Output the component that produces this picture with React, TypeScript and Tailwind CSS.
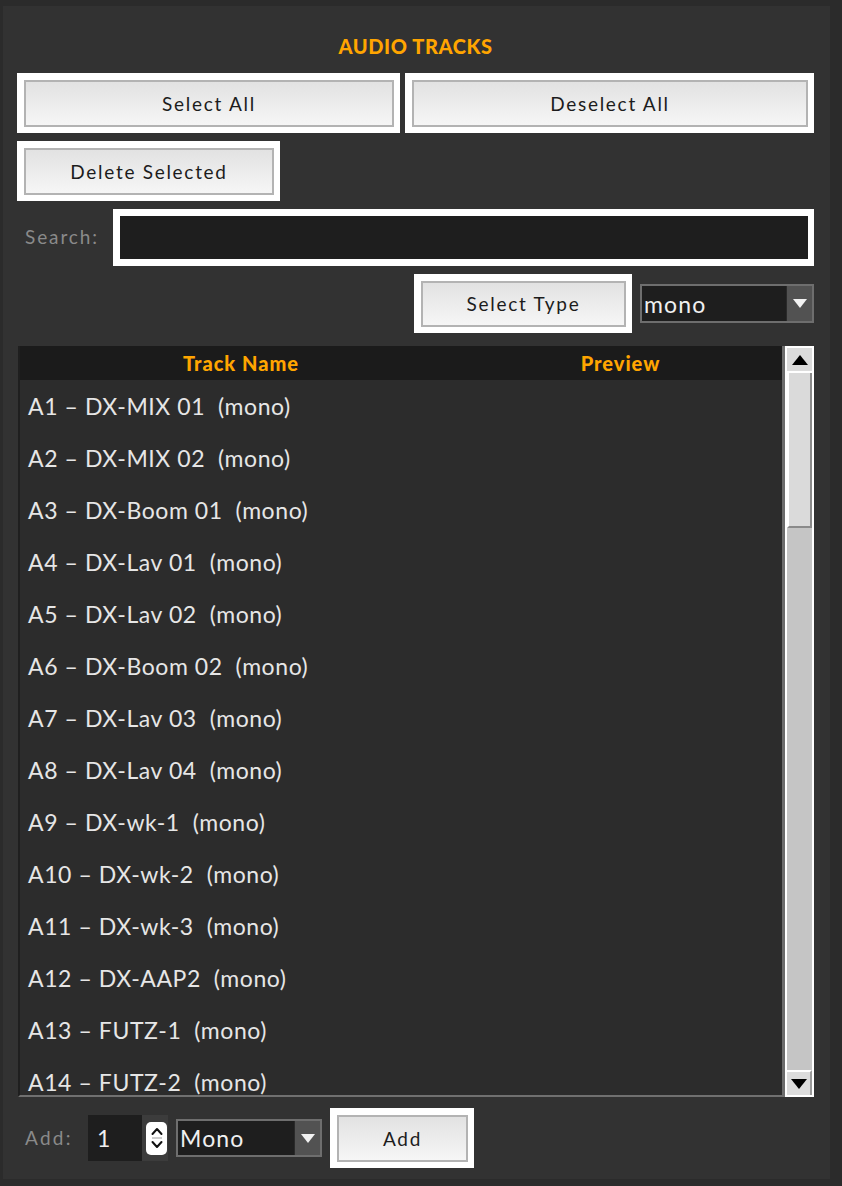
import React from "react";

const tracks = [
  "A1 – DX-MIX 01",
  "A2 – DX-MIX 02",
  "A3 – DX-Boom 01",
  "A4 – DX-Lav 01",
  "A5 – DX-Lav 02",
  "A6 – DX-Boom 02",
  "A7 – DX-Lav 03",
  "A8 – DX-Lav 04",
  "A9 – DX-wk-1",
  "A10 – DX-wk-2",
  "A11 – DX-wk-3",
  "A12 – DX-AAP2",
  "A13 – FUTZ-1",
  "A14 – FUTZ-2",
  "A15 – FUTZ-3",
];

// white framed push button, like the native one in the plugin
const FrameButton = ({
  label,
  className,
}: {
  label: string;
  className?: string;
}) => (
  <div className={"shrink-0 bg-white p-[7px] pr-[6px] pb-[6px] " + (className ?? "")}>
    <div className="flex h-full items-center justify-center border-2 border-[#b3b3b3] bg-gradient-to-b from-[#e2e2e2] to-[#f6f6f6] text-[19px] leading-[22px] tracking-[0.09em] text-[#1c1c1c]">
      <span>{label}</span>
    </div>
  </div>
);

const DropArrow = () => (
  <div className="flex h-full w-[26px] items-center justify-center border-l border-[#2a2a2a] bg-[#525252]">
    <svg width="14" height="9" viewBox="0 0 14 9">
      <path d="M0 0 H14 L7 9 Z" fill="#f2f2f2" />
    </svg>
  </div>
);

const Dropdown = ({ value, className }: { value: string; className?: string }) => (
  <div
    className={
      "flex shrink-0 items-stretch border-2 border-[#6e6e6e] bg-[#1e1e1e] " +
      (className ?? "")
    }
  >
    <div className="flex flex-1 items-center pl-[2px] text-[23px] leading-[26px] tracking-[0.05em] text-[#f0f0f0]">
      <span>{value}</span>
    </div>
    <DropArrow />
  </div>
);

export default function App() {
  return (
    <div
      className="h-[1186px] w-[842px] bg-[#2b2b2b] pl-[3px] pr-[12px] pt-[6px] pb-[7px]"
      style={{ fontFamily: "Lato, 'Open Sans', sans-serif" }}
    >
      <div className="flex h-full flex-col bg-[#323232] pl-[14px] pr-[16px]">
        {/* title */}
        <div className="h-[67px] pt-[30px] text-center text-[20px] font-black leading-[20px] tracking-[0.03em] text-[#ffa500]">
          AUDIO TRACKS
        </div>

        <div className="flex h-[60px] gap-[5px]">
          <FrameButton label="Select All" className="w-[383px]" />
          <FrameButton label="Deselect All" className="flex-1" />
        </div>

        <div className="mt-[8px] flex h-[60px]">
          <FrameButton label="Delete Selected" className="w-[263px]" />
        </div>

        {/* search */}
        <div className="mt-[8px] flex h-[57px] items-center">
          <div className="w-[96px] shrink-0 pl-[8px] text-[19px] tracking-[0.1em] text-[#8a8a8a]">
            Search:
          </div>
          <div className="h-full flex-1 bg-white p-[7px] pr-[6px]">
            <div className="h-full bg-[#1e1e1e]" />
          </div>
        </div>

        <div className="mt-[8px] flex h-[59px] items-center justify-end gap-[8px]">
          <FrameButton label="Select Type" className="h-full w-[218px]" />
          <Dropdown value="mono" className="h-[39px] w-[174px]" />
        </div>

        {/* track table + scrollbar */}
        <div className="mt-[13px] ml-[1px] flex h-[751px]">
          <div className="flex flex-1 flex-col overflow-hidden border-b-2 border-l-2 border-r-[3px] border-[#1f1f1f] border-b-[#707070] border-r-[#6c6c6c] bg-[#2c2c2c]">
            <div className="flex h-[34px] shrink-0 items-center bg-[#1b1b1b] text-[20px] font-black tracking-[0.05em] text-[#ffa500]">
              <div className="w-[442px] text-center">Track Name</div>
              <div className="flex-1 pr-[3px] text-center">Preview</div>
            </div>
            <div className="flex-1 overflow-hidden">
              {tracks.map((t) => (
                <div
                  key={t}
                  className="flex h-[52px] items-center whitespace-pre pl-[8px] text-[23px] tracking-[0.025em] text-[#e6e6e6]"
                >
                  {t + "  (mono)"}
                </div>
              ))}
            </div>
          </div>
          <div className="flex w-[29px] flex-col border-2 border-white bg-[#c5c5c5]">
            <div className="flex h-[25px] items-center justify-center border-b-2 border-white bg-[#dcdcdc]">
              <svg width="16" height="10" viewBox="0 0 16 10">
                <path d="M8 0 L16 10 H0 Z" fill="#000" />
              </svg>
            </div>
            <div className="h-[155px] border-r-2 border-b-2 border-[#8a8a8a] border-l-2 border-l-white bg-[#dadada]" />
            <div className="flex-1" />
            <div className="flex h-[25px] items-center justify-center border-t-2 border-r-2 border-white border-r-[#9a9a9a] bg-[#dcdcdc]">
              <svg width="16" height="10" viewBox="0 0 16 10">
                <path d="M0 0 H16 L8 10 Z" fill="#000" />
              </svg>
            </div>
          </div>
        </div>

        {/* add row */}
        <div className="mt-[11px] flex h-[60px] items-center">
          <div className="w-[71px] shrink-0 pl-[8px] text-[19px] leading-[22px] tracking-[0.12em] text-[#8a8a8a]">
            <span>Add:</span>
          </div>
          <div className="flex h-[46px] w-[80px] shrink-0 items-center bg-[#3c3c3c]">
            <div className="flex h-full w-[54px] items-center bg-[#1e1e1e] pl-[9px] text-[23px] leading-[26px] text-[#f0f0f0]">
              <span>1</span>
            </div>
            <div className="ml-[4px] flex h-[33px] w-[21px] flex-col items-center justify-center rounded-[5px] bg-white">
              <svg width="14" height="28" viewBox="0 0 14 28">
                <path
                  d="M2.5 10 L7 5 L11.5 10"
                  fill="none"
                  stroke="#111"
                  strokeWidth="2"
                  strokeLinecap="round"
                  strokeLinejoin="round"
                />
                <path d="M2 14 H12" stroke="#9a9a9a" strokeWidth="1" />
                <path
                  d="M2.5 18 L7 23 L11.5 18"
                  fill="none"
                  stroke="#111"
                  strokeWidth="2"
                  strokeLinecap="round"
                  strokeLinejoin="round"
                />
              </svg>
            </div>
          </div>
          <Dropdown value="Mono" className="ml-[8px] h-[38px] w-[146px]" />
          <FrameButton label="Add" className="ml-[8px] h-[60px] w-[144px]" />
        </div>
      </div>
    </div>
  );
}
